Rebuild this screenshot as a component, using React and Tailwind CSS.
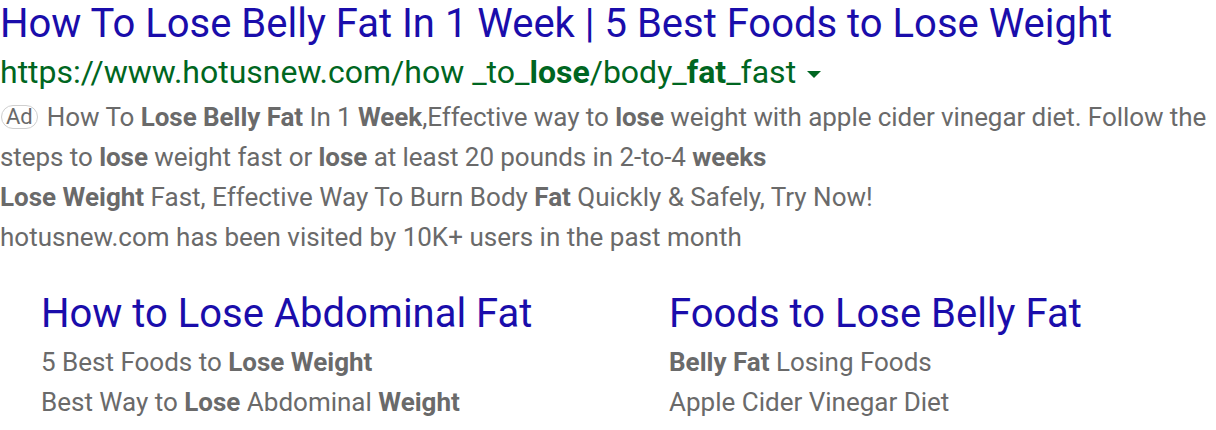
export default function App() {
  return (
    <div className="bg-white w-[1216px] h-[430px] overflow-hidden font-['Roboto',sans-serif]">
      <div className="text-[40px] leading-[48px] text-[#1a0dab] whitespace-nowrap">
        How To Lose Belly Fat In 1 Week | 5 Best Foods to Lose Weight
      </div>
      <div className="flex items-center text-[32px] leading-[48px] text-[#006621] whitespace-nowrap">
        <span>
          https://www.hotusnew.com/how _to_<b>lose</b>/body_<b>fat</b>_fast
        </span>
        <svg width="14" height="7" viewBox="0 0 14 7" className="ml-[11px] mt-[4px]">
          <path d="M0 0h14L7 7z" fill="#006621" />
        </svg>
      </div>
      <div className="text-[26px] leading-[40px] text-[#6a6a6a] mt-[1px]">
        <p className="tracking-[-0.06px]">
          <span className="inline-block border border-[#cfcfcf] rounded-full text-[22px] leading-[22px] px-[4px] ml-[1px] mr-[9px] align-[2px] tracking-normal">
            Ad
          </span>
          How To <b>Lose Belly Fat</b> In 1 <b>Week</b>,Effective way to <b>lose</b> weight with apple cider vinegar diet. Follow the steps to <b>lose</b> weight fast or <b>lose</b> at least 20 pounds in 2-to-4 <b>weeks</b>
        </p>
        <p>
          <b>Lose Weight</b> Fast, Effective Way To Burn Body <b>Fat</b> Quickly &amp; Safely, Try Now!
        </p>
        <p>hotusnew.com has been visited by 10K+ users in the past month</p>
      </div>
      <div className="grid grid-cols-[628px_1fr] pl-[41px] mt-[29px]">
        <div>
          <div className="text-[40px] leading-[56px] text-[#1a0dab]">How to Lose Abdominal Fat</div>
          <div className="text-[26px] leading-[40px] text-[#6a6a6a]">
            <p>5 Best Foods to <b>Lose Weight</b></p>
            <p>Best Way to <b>Lose</b> Abdominal <b>Weight</b></p>
          </div>
        </div>
        <div>
          <div className="text-[40px] leading-[56px] text-[#1a0dab]">Foods to Lose Belly Fat</div>
          <div className="text-[26px] leading-[40px] text-[#6a6a6a]">
            <p><b>Belly Fat</b> Losing Foods</p>
            <p>Apple Cider Vinegar Diet</p>
          </div>
        </div>
      </div>
    </div>
  );
}
